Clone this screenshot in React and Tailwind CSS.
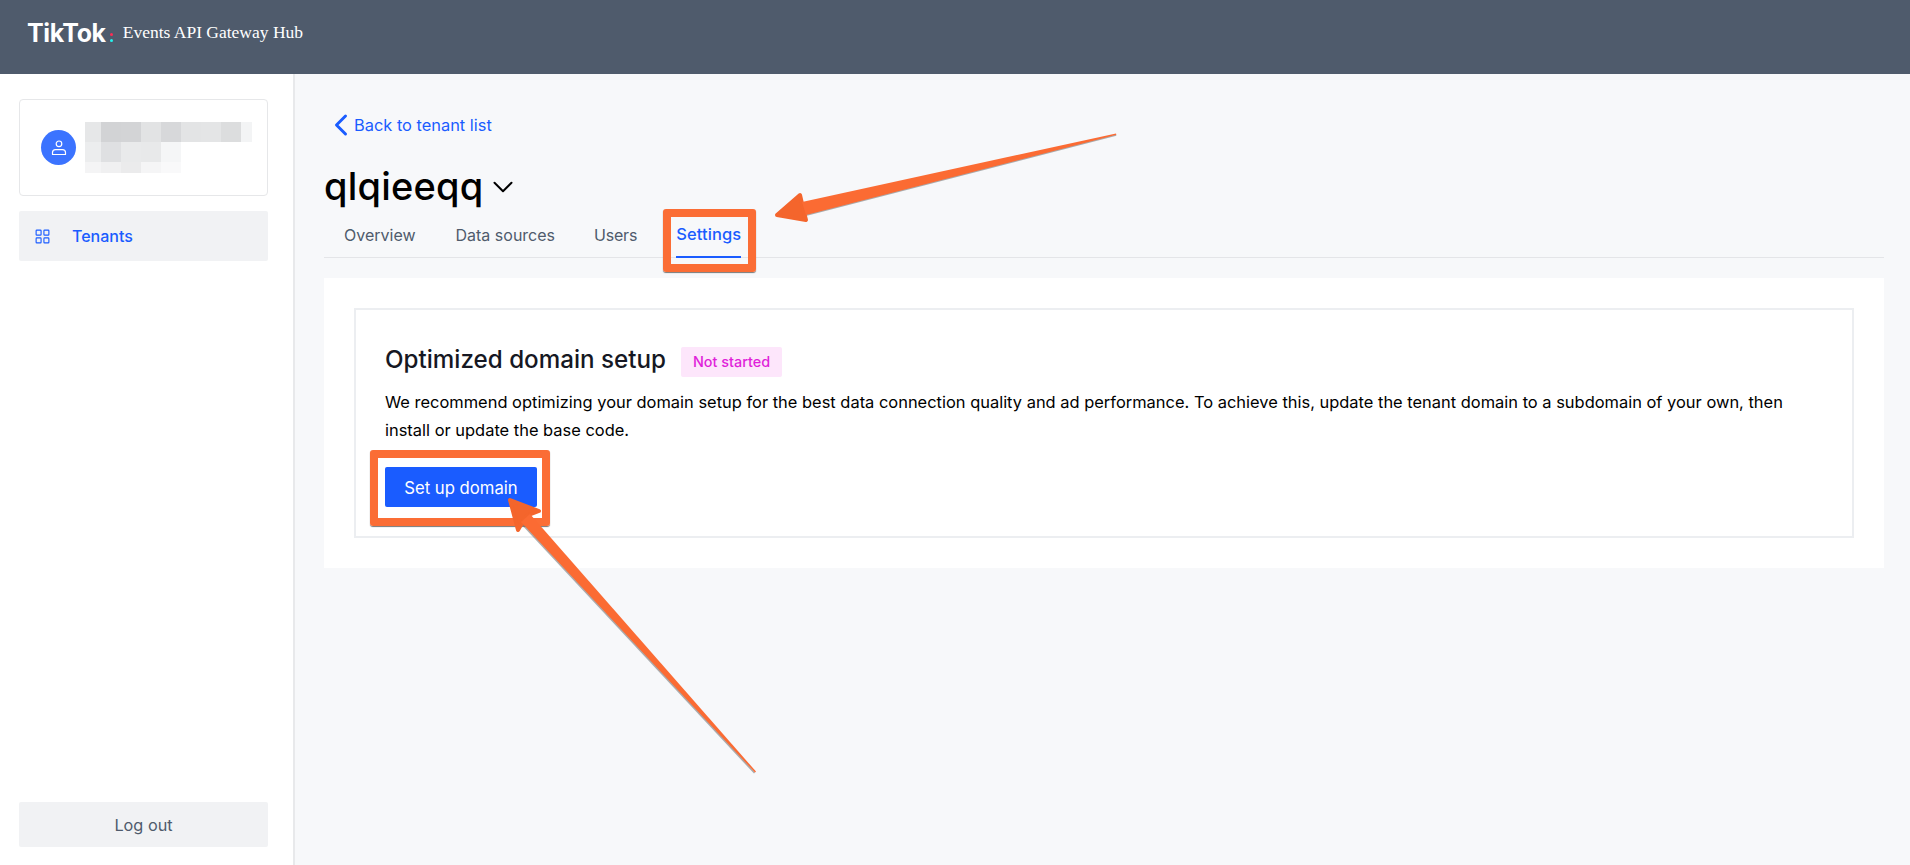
import React from "react";
import { ChevronDown, ChevronLeft, LayoutGrid } from "lucide-react";

const blurRows = [
  { h: "h-[20px]", cells: [["w-[16px]", "bg-[#e6e7e8]"], ["w-[20px]", "bg-[#d2d3d5]"], ["w-[20px]", "bg-[#d3d4d6]"], ["w-[20px]", "bg-[#e2e3e4]"], ["w-[20px]", "bg-[#d7d8da]"], ["w-[20px]", "bg-[#e3e4e5]"], ["w-[20px]", "bg-[#e4e5e6]"], ["w-[20px]", "bg-[#dcddde]"], ["w-[11px]", "bg-[#f3f4f5]"]] },
  { h: "h-[20px]", cells: [["w-[16px]", "bg-[#ecedee]"], ["w-[20px]", "bg-[#dfe0e2]"], ["w-[20px]", "bg-[#e9eaeb]"], ["w-[20px]", "bg-[#e8e9ea]"], ["w-[20px]", "bg-[#f5f6f7]"]] },
  { h: "h-[11px]", cells: [["w-[16px]", "bg-[#f4f4f5]"], ["w-[20px]", "bg-[#f0f0f1]"], ["w-[20px]", "bg-[#ebebec]"], ["w-[20px]", "bg-[#f5f5f6]"], ["w-[20px]", "bg-[#f9f9fa]"]] },
];

function Arrows() {
  const bodyA = "M1116 133.4 L1116.4 134.8 L806 215 L802 202 Z";
  const headA = "M777 215 L800 195 L803 208 L806 220 Z";
  const bodyB = "M756 771.6 L755 772.6 L521 522 L530 514 Z";
  const headB = "M510 500 L539 511 L526 516 L518 530 Z";
  return (
    <svg className="absolute left-0 top-0 pointer-events-none" width="1910" height="865" viewBox="0 0 1910 865">
      <path d={bodyA} transform="translate(0 1)" fill="#777" opacity="0.6" />
      <path d={bodyB} transform="translate(-1 1)" fill="#777" opacity="0.6" />
      <path d={headA} fill="#f4652c" stroke="#f4652c" strokeWidth="4" strokeLinejoin="round" />
      <path d={headB} fill="#f4652c" stroke="#f4652c" strokeWidth="4" strokeLinejoin="round" />
      <path d={bodyA} fill="#fb6b33" />
      <path d={bodyB} fill="#fb6b33" />
    </svg>
  );
}

export default function App() {
  return (
    <div className="relative h-[865px] w-[1910px] overflow-hidden bg-[#f7f8fa] font-['Inter',sans-serif] text-[16px] text-black">
      <header className="flex h-[74px] items-center bg-[#4f5b6c] pl-[27px] pb-[8px] text-white">
        <span className="text-[25px] font-bold leading-none tracking-[-0.4px]">TikTok</span>
        <span className="ml-[4px] mt-[8px] flex flex-col gap-[3px]">
          <span className="h-[3px] w-[3px] rounded-full bg-[#fe2c55]" />
          <span className="h-[3px] w-[3px] rounded-full bg-[#25f4ee]" />
        </span>
        <span className="ml-[10px] mt-[-1px] font-['Liberation_Serif',serif] text-[17.5px]">Events API Gateway Hub</span>
      </header>

      <div className="flex h-[791px]">
        <aside className="flex w-[295px] shrink-0 flex-col border-r-2 border-[#e8e9eb] bg-white pl-[19px] pr-[25px] pt-[25px] pb-[17px]">
          <div className="flex h-[97px] items-center rounded-[4px] border border-[#e6e7e9] pl-[21px]">
            <div className="flex h-[35px] w-[35px] items-center justify-center rounded-full bg-[#3b73ff]">
              <svg width="16" height="16" viewBox="0 0 16 16" fill="none" stroke="#fff" strokeWidth="1.2">
                <circle cx="8" cy="3.8" r="2.8" />
                <path d="M1.5 14.5 V12.5 C1.5 10.6 3 9.6 4.6 9.6 H11.4 C13 9.6 14.5 10.6 14.5 12.5 V14.5 Z" strokeLinejoin="round" />
              </svg>
            </div>
            <div className="ml-[9px] flex flex-col">
              {blurRows.map((row, i) => (
                <div key={i} className={`flex ${row.h}`}>
                  {row.cells.map(([w, c], j) => (
                    <div key={j} className={`${w} ${c}`} />
                  ))}
                </div>
              ))}
            </div>
          </div>

          <div className="mt-[15px] flex h-[50px] items-center rounded-[2px] bg-[#f1f2f4] pl-[15px] text-[#1a5cff]">
            <LayoutGrid size={17} strokeWidth={1.6} />
            <span className="ml-[21px] font-medium">Tenants</span>
          </div>

          <button className="mt-auto mb-[1px] h-[45px] rounded-[2px] bg-[#f1f2f4] pt-[2px] text-[16.3px] text-[#4f5b6c]">Log out</button>
        </aside>

        <main className="flex-1 pl-[29px] pr-[26px]">
          <a className="mt-[39px] flex h-[24px] items-center text-[16.4px] text-[#1a5cff]">
            <ChevronLeft size={36} strokeWidth={2} className="ml-[-1px] shrink-0" />
            <span className="ml-[-5px]">Back to tenant list</span>
          </a>

          <div className="mt-[20px] flex h-[50px] items-center pt-[8px]">
            <h1 className="text-[38px] font-medium leading-none tracking-[0.2px]">qlqieeqq</h1>
            <ChevronDown size={34} strokeWidth={1.4} className="ml-[3px] mt-[2px]" />
          </div>

          <nav className="flex h-[51px] items-stretch border-b border-[#e4e5e8] pl-[20px] text-[#4f5b6c]">
            <span className="flex items-center pt-[5px]">Overview</span>
            <span className="ml-[40px] flex items-center pt-[5px]">Data sources</span>
            <span className="ml-[39px] flex items-center pt-[5px] tracking-[-0.2px]">Users</span>
            <span className="relative ml-[39px] flex items-center pt-[5px] text-[16.5px] font-medium tracking-[0.1px] text-[#1a5cff]">
              Settings
              <span className="absolute bottom-[-1px] left-0 right-0 h-[2px] bg-[#1a5cff]" />
              <span className="absolute left-[-13px] right-[-15px] top-[2px] bottom-[-15px] rounded-[3px] border-[8px] border-[#fb6d35] shadow-[0_1px_1px_#777]" />
            </span>
          </nav>

          <section className="mt-[20px] h-[290px] bg-white p-[30px]">
            <div className="h-[230px] border-2 border-[#eceef1] pl-[29px] pr-[40px] pt-[28px]">
              <div className="flex h-[44px] items-center">
                <h2 className="text-[24.2px] font-medium leading-none text-[#161823]">Optimized domain setup</h2>
                <span className="ml-[15px] mt-[4px] flex h-[30px] items-center rounded-[2px] bg-[#fde6fb] px-[12px] text-[14.4px] font-medium text-[#e01fd9]">Not started</span>
              </div>
              <p className="mt-[6px] text-[16.46px] leading-[28px] text-black">
                We recommend optimizing your domain setup for the best data connection quality and ad performance. To achieve this, update the tenant domain to a subdomain of your own, then install or update the base code.
              </p>
              <button className="relative mt-[23px] h-[40px] w-[152px] rounded-[2px] bg-[#1a5cff] pt-[3px] text-[16.7px] text-white">
                Set up domain
                <span className="absolute left-[-15px] right-[-13px] top-[-17px] bottom-[-19px] rounded-[3px] border-[8px] border-[#fb6d35] shadow-[0_1px_1px_#777]" />
              </button>
            </div>
          </section>
        </main>
      </div>

      <Arrows />
    </div>
  );
}
